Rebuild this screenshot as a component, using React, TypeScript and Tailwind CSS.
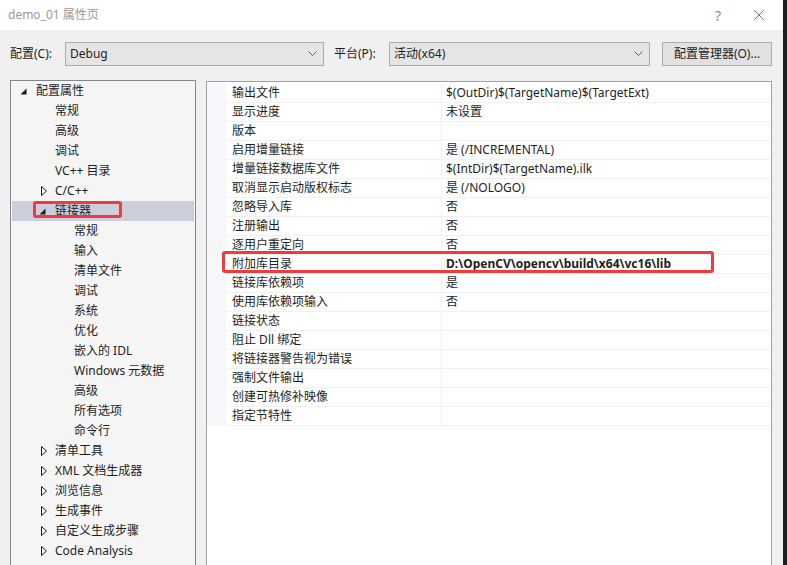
import React from "react";

const FONT = { fontFamily: '"Noto Sans", "Noto Sans CJK SC", sans-serif' };

type TreeItem = { label: string; level: number; state?: "open" | "closed"; selected?: boolean };

const tree: TreeItem[] = [
  { label: "配置属性", level: 0, state: "open" },
  { label: "常规", level: 1 },
  { label: "高级", level: 1 },
  { label: "调试", level: 1 },
  { label: "VC++ 目录", level: 1 },
  { label: "C/C++", level: 1, state: "closed" },
  { label: "链接器", level: 1, state: "open", selected: true },
  { label: "常规", level: 2 },
  { label: "输入", level: 2 },
  { label: "清单文件", level: 2 },
  { label: "调试", level: 2 },
  { label: "系统", level: 2 },
  { label: "优化", level: 2 },
  { label: "嵌入的 IDL", level: 2 },
  { label: "Windows 元数据", level: 2 },
  { label: "高级", level: 2 },
  { label: "所有选项", level: 2 },
  { label: "命令行", level: 2 },
  { label: "清单工具", level: 1, state: "closed" },
  { label: "XML 文档生成器", level: 1, state: "closed" },
  { label: "浏览信息", level: 1, state: "closed" },
  { label: "生成事件", level: 1, state: "closed" },
  { label: "自定义生成步骤", level: 1, state: "closed" },
  { label: "Code Analysis", level: 1, state: "closed" },
];

const props: [string, string, boolean?][] = [
  ["输出文件", "$(OutDir)$(TargetName)$(TargetExt)"],
  ["显示进度", "未设置"],
  ["版本", ""],
  ["启用增量链接", "是 (/INCREMENTAL)"],
  ["增量链接数据库文件", "$(IntDir)$(TargetName).ilk"],
  ["取消显示启动版权标志", "是 (/NOLOGO)"],
  ["忽略导入库", "否"],
  ["注册输出", "否"],
  ["逐用户重定向", "否"],
  ["附加库目录", "D:\\OpenCV\\opencv\\build\\x64\\vc16\\lib", true],
  ["链接库依赖项", "是"],
  ["使用库依赖项输入", "否"],
  ["链接状态", ""],
  ["阻止 Dll 绑定", ""],
  ["将链接器警告视为错误", ""],
  ["强制文件输出", ""],
  ["创建可热修补映像", ""],
  ["指定节特性", ""],
];

const padByLevel = ["pl-[5px]", "pl-[24px]", "pl-[43px]"];

function Expanded() {
  return (
    <svg width="7" height="7" viewBox="0 0 7 7" className="ml-[3px]">
      <polygon points="6.5,0.5 6.5,6.5 0.5,6.5" fill="#1e1e1e" />
    </svg>
  );
}
function Collapsed() {
  return (
    <svg width="7" height="10" viewBox="0 0 7 10" className="ml-[5px]">
      <polygon points="0.5,0.5 5.5,5 0.5,9.5" fill="none" stroke="#1e1e1e" strokeWidth="1" />
    </svg>
  );
}

function Chevron() {
  return (
    <svg width="9" height="6" viewBox="0 0 9 6">
      <polyline points="0.5,0.5 4.5,4.5 8.5,0.5" fill="none" stroke="#606060" strokeWidth="1" />
    </svg>
  );
}

function Combo({ value, w }: { value: string; w: string }) {
  return (
    <div className={`${w} h-[24px] bg-[#e5e5e5] border border-[#acacac] flex items-center justify-between pl-[4px] pr-[6px]`}>
      <span className="text-[12px] text-[#1e1e1e]">{value}</span>
      <Chevron />
    </div>
  );
}

export default function App() {
  return (
    <div className="w-[787px] h-[565px] overflow-hidden flex bg-[#1f1f1f] text-[#1e1e1e]" style={FONT}>
      <div className="w-[783px] h-full flex flex-col bg-[#f0f0f0]">
        {/* title bar */}
        <div className="h-[30px] bg-white flex items-center shrink-0">
          <span className="pl-[8px] text-[12px] text-[#999999] flex-1">demo_01 属性页</span>
          <span className="text-[14px] text-[#888888] w-[20px] text-center mr-[25px]">?</span>
          <svg width="12" height="12" viewBox="0 0 12 12" className="mr-[18px]">
            <line x1="1" y1="1" x2="11" y2="11" stroke="#777" strokeWidth="1" />
            <line x1="11" y1="1" x2="1" y2="11" stroke="#777" strokeWidth="1" />
          </svg>
        </div>

        {/* toolbar */}
        <div className="flex items-center h-[24px] mt-[12px] pl-[10px] shrink-0">
          <span className="text-[12px] w-[55px]">配置(C):</span>
          <Combo value="Debug" w="w-[259px]" />
          <span className="text-[12px] ml-[10px] w-[55px]">平台(P):</span>
          <Combo value="活动(x64)" w="w-[261px]" />
          <div className="ml-[12px] w-[110px] h-[24px] bg-[#e1e1e1] border border-[#adadad] flex items-center justify-center text-[12px]">
            配置管理器(O)...
          </div>
        </div>

        {/* content */}
        <div className="flex flex-1 mt-[14px] pl-[10px] min-h-0">
          {/* tree */}
          <div className="w-[186px] h-[600px] border border-[#868690] bg-[#f5f5f5] shrink-0">
            {tree.map((t, i) => (
              <div
                key={i}
                className={`relative h-[20px] mx-[1px] flex items-center ${padByLevel[t.level]} ${t.selected ? "bg-[#cccedb]" : ""}`}
              >
                <div className="w-[19px] flex items-center">
                  {t.state === "open" ? <Expanded /> : t.state === "closed" ? <Collapsed /> : null}
                </div>
                <span className="text-[12px] whitespace-nowrap">{t.label}</span>
                {t.selected && (
                  <div className="absolute left-[21px] top-0 w-[89px] h-[17px] border-[3px] border-[#ef3b3f] rounded-[3px]" />
                )}
              </div>
            ))}
          </div>

          {/* grid */}
          <div className="ml-[10px] mr-[11px] mt-[1px] flex-1 h-[600px] border border-[#a0a0a0] bg-white pt-[2px]">
            {props.map(([k, v, hl], i) => (
              <div key={i} className="relative flex h-[19px]">
                <div className="w-[19px] bg-[#f6f7fb] shrink-0" />
                <div className="w-[216px] border-b border-r border-[#f0f0f5] flex items-center pl-[6px] text-[12px] whitespace-nowrap">
                  {k}
                </div>
                <div className={`flex-1 border-b border-[#f0f0f5] flex items-center pl-[4px] text-[12px] whitespace-nowrap ${hl ? "font-bold" : ""}`}>
                  {v}
                </div>
                {hl && (
                  <div className="absolute left-[15px] top-[-4px] w-[492px] h-[22px] border-[3px] border-[#ef3b3f] rounded-[3px]" />
                )}
              </div>
            ))}
          </div>
        </div>
      </div>
    </div>
  );
}
